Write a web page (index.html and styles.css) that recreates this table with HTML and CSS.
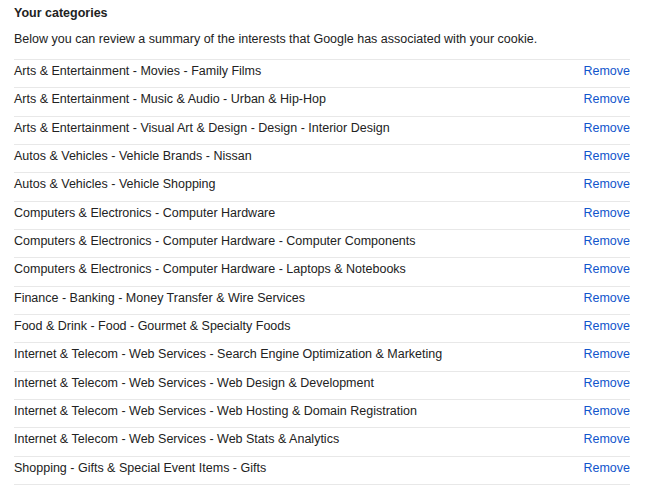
FILE: index.html
```html
<!DOCTYPE html>
<html>
<head>
<meta charset="utf-8">
<link rel="stylesheet" href="styles.css">
</head>
<body>
<div class="wrap">
  <h2 class="title">Your categories</h2>
  <p class="desc">Below you can review a summary of the interests that Google has associated with your cookie.</p>
  <ul class="list">
    <li class="row"><span>Arts &amp; Entertainment - Movies - Family Films</span><a href="#" class="rm">Remove</a></li>
    <li class="row"><span>Arts &amp; Entertainment - Music &amp; Audio - Urban &amp; Hip-Hop</span><a href="#" class="rm">Remove</a></li>
    <li class="row"><span>Arts &amp; Entertainment - Visual Art &amp; Design - Design - Interior Design</span><a href="#" class="rm">Remove</a></li>
    <li class="row"><span>Autos &amp; Vehicles - Vehicle Brands - Nissan</span><a href="#" class="rm">Remove</a></li>
    <li class="row"><span>Autos &amp; Vehicles - Vehicle Shopping</span><a href="#" class="rm">Remove</a></li>
    <li class="row"><span>Computers &amp; Electronics - Computer Hardware</span><a href="#" class="rm">Remove</a></li>
    <li class="row"><span>Computers &amp; Electronics - Computer Hardware - Computer Components</span><a href="#" class="rm">Remove</a></li>
    <li class="row"><span>Computers &amp; Electronics - Computer Hardware - Laptops &amp; Notebooks</span><a href="#" class="rm">Remove</a></li>
    <li class="row"><span>Finance - Banking - Money Transfer &amp; Wire Services</span><a href="#" class="rm">Remove</a></li>
    <li class="row"><span>Food &amp; Drink - Food - Gourmet &amp; Specialty Foods</span><a href="#" class="rm">Remove</a></li>
    <li class="row"><span>Internet &amp; Telecom - Web Services - Search Engine Optimization &amp; Marketing</span><a href="#" class="rm">Remove</a></li>
    <li class="row"><span>Internet &amp; Telecom - Web Services - Web Design &amp; Development</span><a href="#" class="rm">Remove</a></li>
    <li class="row"><span>Internet &amp; Telecom - Web Services - Web Hosting &amp; Domain Registration</span><a href="#" class="rm">Remove</a></li>
    <li class="row"><span>Internet &amp; Telecom - Web Services - Web Stats &amp; Analytics</span><a href="#" class="rm">Remove</a></li>
    <li class="row"><span>Shopping - Gifts &amp; Special Event Items - Gifts</span><a href="#" class="rm">Remove</a></li>
  </ul>
</div>
</body>
</html>
```
FILE: styles.css
```css
html, body {
  margin: 0;
  padding: 0;
  background: #fff;
}
body {
  font-family: "Liberation Sans", Arial, sans-serif;
  font-size: 12.5px;
  color: #222;
}
.wrap {
  padding: 5px 15px 0 14px;
}
.title {
  margin: 0;
  font-size: 12.5px;
  font-weight: bold;
  line-height: 16px;
}
.desc {
  margin: 10px 0 0;
  line-height: 16px;
}
.list {
  list-style: none;
  margin: 12px 0 0;
  padding: 0;
  border-top: 1px solid #e8e8e8;
}
.row {
  display: flex;
  justify-content: space-between;
  align-items: flex-start;
  line-height: 16px;
  padding: 3px 0 0;
  height: 24.33px;
  border-bottom: 1px solid #e8e8e8;
}
.rm {
  color: #1155cc;
  text-decoration: none;
}
```
